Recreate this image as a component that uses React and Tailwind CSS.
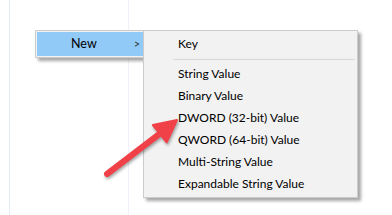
import React from "react";

const items = [
  "String Value",
  "Binary Value",
  "DWORD (32-bit) Value",
  "QWORD (64-bit) Value",
  "Multi-String Value",
  "Expandable String Value",
];

export default function App() {
  return (
    <div
      className="relative w-[392px] h-[215px] bg-white overflow-hidden text-black"
      style={{ fontFamily: 'Lato, "Segoe UI", sans-serif' }}
    >
      {/* background column lines */}
      <div className="flex h-full">
        <div className="w-[10px] h-full border-r border-[#e3ecf8]" />
        <div className="w-[119px] h-full border-r border-[#eef2f8]" />
      </div>

      {/* parent menu */}
      <div className="absolute left-[35px] top-[30px] w-[112px] h-[28px] border border-[#cccccc] bg-[#f0f0f0] p-px shadow-[3px_3px_3px_rgba(0,0,0,0.35)]">
        <div className="h-full bg-[#91c9f7] flex items-center text-[12.5px]">
          <span className="pl-[34px]">New</span>
          <span className="ml-[37px] text-[11px] text-[#333]">&gt;</span>
        </div>
      </div>

      {/* submenu */}
      <div className="absolute left-[143px] top-[30px] w-[215px] border border-[#cccccc] bg-[#f2f2f2] py-[2px] shadow-[3px_3px_3px_rgba(0,0,0,0.35)] text-[12px]">
        <div className="h-[22px] flex items-center pl-[34px]">Key</div>
        <div className="h-[8px] flex items-center ml-[29px] mr-[2px]">
          <div className="w-full border-t border-[#d7d7d7]" />
        </div>
        {items.map((t) => (
          <div key={t} className="h-[22px] flex items-center pl-[34px]">
            {t}
          </div>
        ))}
      </div>

      {/* red arrow */}
      <svg
        className="absolute left-0 top-0 pointer-events-none"
        width="392"
        height="215"
        viewBox="0 0 392 215"
        style={{ filter: "drop-shadow(1px 2px 1.5px rgba(0,0,0,0.35))" }}
      >
        <line
          x1="107"
          y1="174"
          x2="162"
          y2="132"
          stroke="#f04149"
          strokeWidth="6"
          strokeLinecap="round"
        />
        <polygon
          points="177,120 166.7,142.4 152.9,125.1"
          fill="#f04149"
          stroke="#f04149"
          strokeWidth="2"
          strokeLinejoin="round"
        />
      </svg>
    </div>
  );
}
